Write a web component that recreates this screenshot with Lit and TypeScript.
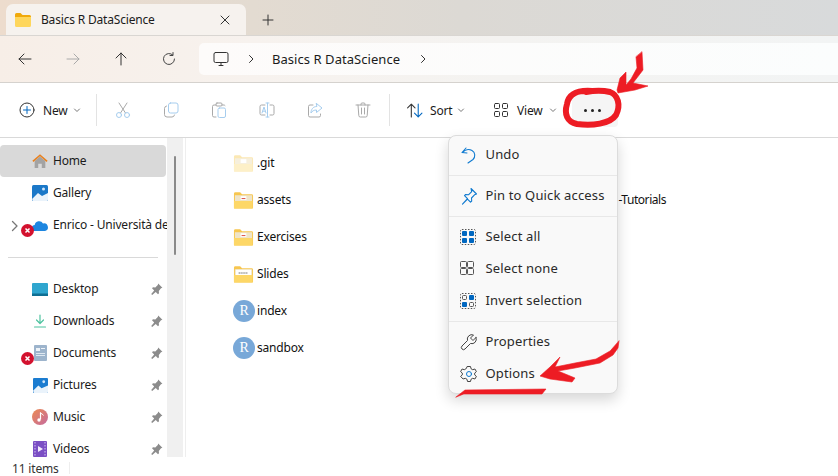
import { LitElement, html, css, svg } from "lit";
import { customElement } from "lit/decorators.js";

const S = (w: number, body: unknown, vb = "0 0 16 16") =>
  html`<svg width=${w} height=${w} viewBox=${vb} fill="none" stroke-linecap="round" stroke-linejoin="round">${body}</svg>`;

const folder = (inner: unknown = "", light = false) => html`<svg width="21" height="20" viewBox="0 0 22 20">
  <path d="M1 3.5a1.5 1.5 0 0 1 1.5-1.5h5l2 2h10a1.500 1.500 0 0 1 1.500 1.500V18a1 1 0 0 1-1 1H2a1 1 0 0 1-1-1z" fill=${light ? "#fbe8b4" : "#f7c64f"}/>
  <rect x="2" y="5" width="18" height="8" fill=${light ? "#f6efdc" : "#efe4c8"}/>
  ${inner}
  <path d="M1 11h19.500V18a1 1 0 0 1-1 1H2a1 1 0 0 1-1-1z" fill=${light ? "#fdf0c8" : "#fdd767"}/>
</svg>`;

const pin = html`<svg class="pin" width="14" height="14" viewBox="0 0 14 14"><path d="M8.2 1.6l4.2 4.2-1.4.5-2.2 2.600.2 2.300-1 1-2.300-2.300L2.200 13l-1-1 3-3.600L2 6.200l1-1 2.300.2 2.500-2.300z" fill="#8c8c8c"/></svg>`;

const errBadge = html`<svg class="err" width="13" height="13" viewBox="0 0 13 13"><circle cx="6.500" cy="6.500" r="6.500" fill="#d3112e"/><path d="M4.500 4.500l4 4M8.500 4.500l-4 4" stroke="#fff" stroke-width="1.500"/></svg>`;

const rIcon = html`<span class="r">R</span>`;

const blueOn = "#0067c0";
const grid = (fills: boolean[], dashed: boolean) => html`<svg width="16" height="16" viewBox="0 0 16 16">
  ${dashed ? svg`<rect x=".5" y=".5" width="15" height="15" rx="1.500" fill="none" stroke="#555" stroke-dasharray="1.500 1.500"/>` : ""}
  ${[[2, 2], [9, 2], [2, 9], [9, 9]].map(([x, y], i) =>
    fills[i]
      ? svg`<rect x=${x} y=${y} width="5" height="5" rx="1" fill=${blueOn}/>`
      : dashed
        ? svg`<rect x=${x + 0.5} y=${y + 0.5} width="4" height="4" rx="1" fill="none" stroke="#555"/>`
        : svg`<rect x=${x - 1.5} y=${y - 1.5} width="6" height="6" rx="1" fill="none" stroke="#555"/>`)}
</svg>`;

@customElement("app-root")
export class AppRoot extends LitElement {
  static styles = css`
    :host {
      display: block;
      position: relative;
      width: 838px;
      height: 476px;
      overflow: hidden;
      background: #fff;
      font-family: "Noto Sans", "Open Sans", sans-serif;
      font-size: 12px;
      letter-spacing: -0.18px;
      color: #1b1b1b;
    }
    .window { display: flex; flex-direction: column; height: 476px; }
    .tabs {
      height: 35px;
      box-sizing: border-box;
      padding: 4px 0 0 6px;
      display: flex;
      align-items: stretch;
      background: linear-gradient(90deg, #eddccd 0%, #e3dbd1 30%, #dcd9d4 55%, #d8dadb 100%);
    }
    .tab {
      width: 240px;
      box-sizing: border-box;
      padding: 0 15px 0 9px;
      display: flex;
      align-items: center;
      background: #f6f2ee;
      border-radius: 7px 7px 0 0;
    }
    .tab .title { margin-left: 10px; flex: 1; }
    .plus { width: 44px; display: flex; align-items: center; justify-content: center; }
    .nav {
      height: 48px;
      box-sizing: border-box;
      border-top: 1px solid #d9d6d2;
      border-bottom: 1px solid #d5d2ce;
      display: flex;
      align-items: center;
      background: linear-gradient(90deg, #f7eee7 0%, #f7f2ee 30%, #f4f3f1 60%, #f2f4f4 100%);
    }
    .nav-btn { width: 48px; height: 32px; display: flex; align-items: center; justify-content: center; }
    .navbtns { display: flex; margin: 0 6px 0 1px; }
    .address {
      flex: 1;
      height: 32px;
      margin-top: -1px;
      background: linear-gradient(90deg, #fdfbfa, #fbfdfd);
      border-radius: 5px 0 0 5px;
      display: flex;
      align-items: center;
      padding-left: 14px;
      font-size: 13px;
      letter-spacing: 0.05px;
    }
    .address .crumb { margin: 0 18px 0 16px; }
    .address .mon { margin-right: 17px; display: flex; }
    .toolbar {
      height: 55px;
      box-sizing: border-box;
      border-bottom: 1px solid #d9d9d9;
      display: flex;
      align-items: center;
      padding-left: 19px;
    }
    .tb { display: flex; align-items: center; }
    .new { width: 77px; }
    .new .t { margin: 0 5px 0 8px; }
    .clip { margin-left: 2px; }
    .sort { margin-left: 16px; width: 88px; }
    .sort .t { margin: 0 5px 0 7px; }
    .view { width: 78px; }
    .view .t { margin: 0 6px 0 9px; }
    .div2 { margin-left: 2px; }
    .divider { width: 1px; height: 32px; background: #e3e3e3; }
    .icon48 { width: 48px; display: flex; justify-content: center; }
    .chev { display: flex; }
    .more {
      width: 46px;
      height: 34px;
      box-sizing: border-box;
      padding-right: 5px;
      border-radius: 4px;
      background: #f5f5f5;
      display: flex;
      align-items: center;
      justify-content: center;
      gap: 4px;
    }
    .more i { width: 3px; height: 3px; background: #222; border-radius: 50%; }
    .body { flex: 1; display: flex; min-height: 0; }
    .side { width: 167px; padding-top: 7px; box-sizing: border-box; overflow: hidden; }
    .side-row {
      position: relative;
      height: 32px;
      display: flex;
      align-items: center;
      padding-left: 32px;
      white-space: nowrap;
      border-radius: 4px;
      overflow: hidden;
    }
    .side-row.active { background: #d9d9d9; margin-right: 1px; }
    .side-row .ico { width: 16px; height: 16px; margin-right: 5px; display: flex; align-items: center; justify-content: center; flex: none; }
    .side-row .label { flex: 1; padding-bottom: 2px; }
    .pin { margin-right: 3px; flex: none; }
    .err { position: absolute; left: 21px; bottom: 4px; }
    .exp { position: absolute; left: 9px; top: 10px; }
    .rule { height: 1px; background: #d9d9d9; margin: 15.500px 9px 15.500px 8px; }
    .track { width: 16px; background: #f0f0f0; display: flex; justify-content: center; padding-top: 18px; box-sizing: border-box; }
    .thumb { width: 2px; height: 99px; background: #8a8a8a; border-radius: 1px; }
    .gap { width: 2px; border-right: 1px solid #eeeeee; }
    .list { flex: 1; padding: 6px 0 0 48px; }
    .file { height: 37px; width: 432px; display: flex; align-items: center; color: #111; }
    .file .fi { width: 23px; display: flex; align-items: center; flex: none; margin-left: -1px; margin-right: 1px; }
    .file .nm { flex: 1; }
    .file .note { letter-spacing: -0.45px; }
    .r {
      width: 22px; height: 22px;
      border-radius: 50%;
      background: #78a8d8;
      color: #fff;
      font: 14px "Liberation Serif", serif;
      display: flex; align-items: center; justify-content: center;
    }
    .status {
      height: 19px;
      box-sizing: border-box;
      padding: 3px 0 0 12px;
      display: flex;
      align-items: center;
      color: #333;
    }
    .status .sep { width: 1px; height: 12px; background: #eee; margin-left: 10px; }
    .menu {
      position: absolute;
      left: 447.500px;
      top: 135px;
      width: 170px;
      height: 259px;
      box-sizing: border-box;
      padding-top: 3px;
      background: #f9f9f9;
      border: 1px solid #dcdcdc;
      border-radius: 8px;
      box-shadow: 0 6px 14px rgba(0,0,0,.16);
      font-size: 13px;
      letter-spacing: 0.15px;
      color: #2a2a2a;
    }
    .mi { height: 32px; display: flex; align-items: center; padding-left: 11px; gap: 8px; }
    .mi svg { flex: none; }
    .mi span { padding-bottom: 2px; }
    .mi.g span { margin-left: 2px; }
    .msep { height: 1px; background: #e8e8e8; margin: 4px 0; }
    .ink { position: absolute; left: 0; top: 0; pointer-events: none; }
    .red { fill: #ed1c24; stroke: #ed1c24; stroke-width: 0.600; }
  `;

  render() {
    const gray = "#a9a9a9";
    const lb = "#a6cdee";
    return html`
      <div class="window">
        <div class="tabs">
          <div class="tab">
            ${html`<svg width="16" height="14" viewBox="0 0 16 14"><path d="M0 1.500A1.500 1.500 0 0 1 1.500 0h4l2 2H14.500A1.500 1.500 0 0 1 16 3.500V5H0z" fill="#f0a90c"/><path d="M0 4h16v8.500a1.500 1.500 0 0 1-1.500 1.500h-13A1.500 1.500 0 0 1 0 12.500z" fill="#fed65c"/></svg>`}
            <span class="title">Basics R DataScience</span>
            ${S(12, svg`<path d="M2 2l8 8M10 2l-8 8" stroke="#333" stroke-width="1"/>`, "0 0 12 12")}
          </div>
          <div class="plus">${S(12, svg`<path d="M6 1v10M1 6h10" stroke="#333" stroke-width="1"/>`, "0 0 12 12")}</div>
        </div>
        <div class="nav">
          <div class="navbtns">
            <div class="nav-btn">${S(16, svg`<path d="M14 8H2M7 3L2 8l5 5" stroke="#333"/>`)}</div>
            <div class="nav-btn">${S(16, svg`<path d="M2 8h12M9 3l5 5-5 5" stroke="#aaa"/>`)}</div>
            <div class="nav-btn">${S(16, svg`<path d="M8 14V2M3 7l5-5 5 5" stroke="#333"/>`)}</div>
            <div class="nav-btn">${S(16, svg`<path d="M13.500 8a5.500 5.500 0 1 1-1.700-4M12 1.500V4.500H9" stroke="#444"/>`)}</div>
          </div>
          <div class="address">
            <span class="mon">${S(16, svg`<rect x="1" y="1.500" width="14" height="10" rx="1.500" stroke="#333"/><path d="M6 14.500h4M8 11.500v3" stroke="#333"/>`)}</span>
            ${S(10, svg`<path d="M3.500 1.500L7 5 3.500 8.500" stroke="#333"/>`, "0 0 10 10")}
            <span class="crumb">Basics R DataScience</span>
            ${S(10, svg`<path d="M3.500 1.500L7 5 3.500 8.500" stroke="#333"/>`, "0 0 10 10")}
          </div>
        </div>
        <div class="toolbar">
          <div class="tb new">
            ${S(16, svg`<circle cx="8" cy="8" r="7" stroke="#333"/><path d="M8 4.500v7M4.500 8h7" stroke="#0067c0"/>`)}
            <span class="t">New</span>
            <span class="chev">${S(8, svg`<path d="M1.500 3L4 5.500 6.500 3" stroke="#777"/>`, "0 0 8 8")}</span>
          </div>
          <div class="divider"></div>
          <div class="tb clip">
            <span class="icon48">${S(16, svg`<path d="M4 1l6.500 10M12 1L5.500 11" stroke=${gray}/><circle cx="4" cy="13" r="2.500" stroke=${lb}/><circle cx="12" cy="13" r="2.500" stroke=${lb}/>`)}</span>
            <span class="icon48">${S(16, svg`<rect x="5.500" y="1" width="9.500" height="10" rx="2" stroke=${lb}/><path d="M3.500 4A2.500 2.500 0 0 0 1.500 6.500V12.500A2.500 2.500 0 0 0 4 15h5a2.500 2.500 0 0 0 2.500-2" stroke=${gray}/>`)}</span>
            <span class="icon48">${S(16, svg`<path d="M5 3H3a1.500 1.500 0 0 0-1.500 1.500v9A1.500 1.500 0 0 0 3 15h2M11 3h2a1.500 1.500 0 0 1 1 .500" stroke=${gray}/><rect x="5" y="1" width="6" height="3" rx="1" stroke=${gray}/><rect x="7" y="6" width="7.500" height="9.500" rx="1.500" stroke=${lb}/>`)}</span>
            <span class="icon48">${S(16, svg`<path d="M6 3H2.500A1.500 1.500 0 0 0 1 4.500v7A1.500 1.500 0 0 0 2.500 13H6M11 3h2.500A1.500 1.500 0 0 1 15 4.500v7a1.500 1.500 0 0 1-1.500 1.500H11" stroke=${gray}/><path d="M8.500 1v14M7 1h3M7 15h3" stroke=${lb}/><path d="M3 11L5 5l2 6M3.700 9.200h2.600" stroke=${lb}/>`)}</span>
            <span class="icon48">${S(16, svg`<path d="M6 3H3a1.500 1.500 0 0 0-1.500 1.500v9A1.500 1.500 0 0 0 3 15h9a1.500 1.500 0 0 0 1.500-1.500V12" stroke=${gray}/><path d="M9.500 1.500L15 6l-5.500 4.500V8C7 8 5 9 4 11c0-3.500 2-6.500 5.500-6.500z" stroke=${lb}/>`)}</span>
            <span class="icon48">${S(16, svg`<path d="M1 3h14M6 3V2a1 1 0 0 1 1-1h2a1 1 0 0 1 1 1v1M3 3l.800 10.500A1.500 1.500 0 0 0 5.300 15h5.400a1.500 1.500 0 0 0 1.500-1.500L13 3M6.500 6v6M9.500 6v6" stroke=${gray}/>`)}</span>
          </div>
          <div class="divider div2"></div>
          <div class="tb sort">
            ${S(17, svg`<path d="M5 14V2M1.500 5.500L5 2l3.500 3.500" stroke="#333"/><path d="M11.500 2v12M8 10.500L11.500 14l3.500-3.500" stroke="#0067c0"/>`)}
            <span class="t">Sort</span>
            <span class="chev">${S(8, svg`<path d="M1.500 3L4 5.500 6.500 3" stroke="#777"/>`, "0 0 8 8")}</span>
          </div>
          <div class="tb view">
            ${S(14, svg`<rect x=".5" y=".5" width="5" height="5" rx="1" stroke="#333"/><rect x="8.500" y=".5" width="5" height="5" rx="1" stroke="#333"/><rect x=".5" y="8.500" width="5" height="5" rx="1" stroke="#333"/><rect x="8.500" y="8.500" width="5" height="5" rx="1" stroke="#333"/>`, "0 0 14 14")}
            <span class="t">View</span>
            <span class="chev">${S(8, svg`<path d="M1.500 3L4 5.500 6.500 3" stroke="#777"/>`, "0 0 8 8")}</span>
          </div>
          <div class="more"><i></i><i></i><i></i></div>
        </div>
        <div class="body">
          <div class="side">
            <div class="side-row active">
              <span class="ico"><svg width="18" height="16" viewBox="0 0 18 16"><path d="M3 8l6-5 6 5v8h-4v-5H7v5H3z" fill="#a3a3a3"/><path d="M1 8.500L9 1.500l8 7" fill="none" stroke="#e8811f" stroke-width="1.800"/></svg></span>
              <span class="label">Home</span>
            </div>
            <div class="side-row">
              <span class="ico"><svg width="16" height="16" viewBox="0 0 16 16"><rect width="16" height="16" rx="1.500" fill="#1b78c8"/><path d="M0 14l6-6 4 3 6-3v6.500a1.500 1.500 0 0 1-1.500 1.500H1z" fill="#eaf3fb"/><circle cx="11.500" cy="4" r="1.500" fill="#cfe6fa"/></svg></span>
              <span class="label">Gallery</span>
            </div>
            <div class="side-row">
              <span class="exp">${S(12, svg`<path d="M3.500 1.500L8 6 3.500 10.500" stroke="#777" stroke-width="1.300"/>`, "0 0 12 12")}</span>
              <span class="ico"><svg width="16" height="11" viewBox="0 0 16 11"><path d="M3 11a3 3 0 0 1-.300-6A4.500 4.500 0 0 1 11 3.500a3.700 3.700 0 0 1 2 7.500z" fill="#1d86e0"/></svg></span>
              <span class="label">Enrico - Università de</span>
              ${errBadge}
            </div>
            <div class="rule"></div>
            <div class="side-row">
              <span class="ico"><svg width="16" height="13" viewBox="0 0 16 13"><rect width="16" height="13" rx="1" fill="#2fa6cf"/><rect y="10.500" width="16" height="2.500" fill="#0f6f93"/></svg></span>
              <span class="label">Desktop</span>${pin}
            </div>
            <div class="side-row">
              <span class="ico">${S(14, svg`<path d="M7 1v8M3.500 6L7 9.500 10.500 6" stroke="#4fc3a0" stroke-width="1.200"/><path d="M1.500 13h11" stroke="#4fc3a0" stroke-width="1.200"/>`, "0 0 14 14")}</span>
              <span class="label">Downloads</span>${pin}
            </div>
            <div class="side-row">
              <span class="ico"><svg width="13" height="16" viewBox="0 0 13 16"><rect width="13" height="16" rx="1" fill="#9db4cc"/><rect x="2" y="3" width="4" height="3" fill="#eef3f8"/><rect x="7" y="3" width="4" height="1" fill="#eef3f8"/><rect x="2" y="8" width="9" height="1" fill="#dfe8f0"/><rect x="2" y="10" width="9" height="1" fill="#dfe8f0"/></svg></span>
              <span class="label">Documents</span>${pin}
              ${errBadge}
            </div>
            <div class="side-row">
              <span class="ico"><svg width="15" height="15" viewBox="0 0 14 14"><rect width="14" height="14" rx="1" fill="#1b7cd0"/><path d="M0 12l5-5 3 2.500L14 7v6a1 1 0 0 1-1 1H1z" fill="#eaf3fb"/><circle cx="10" cy="3.500" r="1.300" fill="#cfe6fa"/></svg></span>
              <span class="label">Pictures</span>${pin}
            </div>
            <div class="side-row">
              <span class="ico"><svg width="16" height="16" viewBox="0 0 16 16"><defs><linearGradient id="mg" x1="0" y1="0" x2="1" y2="1"><stop offset="0" stop-color="#ec8a50"/><stop offset="1" stop-color="#c56ba0"/></linearGradient></defs><circle cx="8" cy="8" r="8" fill="url(#mg)"/><path d="M8.500 3.500v7" stroke="#fff" stroke-width="1.200"/><path d="M8.500 3.500c.5 1.500 2.500 1.500 3 3" stroke="#fff" fill="none"/><circle cx="7" cy="11" r="1.700" fill="#fff"/></svg></span>
              <span class="label">Music</span>${pin}
            </div>
            <div class="side-row">
              <span class="ico"><svg width="14" height="16" viewBox="0 0 14 16"><rect width="14" height="16" rx="1" fill="#7b4fc4"/><path d="M2 1v14M12 1v14" stroke="#c7b0ee" stroke-dasharray="1.500 1.500" stroke-width="1.200"/><path d="M5 5l5 3-5 3z" fill="#f1eafc"/></svg></span>
              <span class="label">Videos</span>${pin}
            </div>
          </div>
          <div class="track"><div class="thumb"></div></div>
          <div class="gap"></div>
          <div class="list">
            <div class="file"><span class="fi">${folder(svg`<rect x="8" y="6" width="6" height="4" fill="#fff"/>`, true)}</span><span class="nm">.git</span></div>
            <div class="file"><span class="fi">${folder(svg`<rect x="8" y="6" width="6" height="4" fill="#fff"/><path d="M9 8.500h4" stroke="#d9483b"/>`)}</span><span class="nm">assets</span><span class="note">-Tutorials</span></div>
            <div class="file"><span class="fi">${folder(svg`<rect x="8" y="6" width="6" height="4" fill="#fff"/><path d="M9 8.500h4" stroke="#d9483b"/>`)}</span><span class="nm">Exercises</span></div>
            <div class="file"><span class="fi">${folder(svg`<rect x="3" y="5.500" width="16" height="6" fill="#fff"/><path d="M6 9h10" stroke="#999" stroke-width="2" stroke-dasharray="1 1"/>`)}</span><span class="nm">Slides</span></div>
            <div class="file"><span class="fi">${rIcon}</span><span class="nm">index</span></div>
            <div class="file"><span class="fi">${rIcon}</span><span class="nm">sandbox</span></div>
          </div>
        </div>
        <div class="status"><span>11 items</span><span class="sep"></span></div>
      </div>

      <div class="menu">
        <div class="mi">${S(18, svg`<path d="M6 2L2 6.500l5 .5M2.500 6.500C5 3.500 9 3 12 4.500c3.500 2 3.500 6.500 1 9L8 17" stroke="#0f7ad0" stroke-width="1.100"/>`, "0 0 18 18")}<span>Undo</span></div>
        <div class="msep"></div>
        <div class="mi">${S(18, svg`<path d="M11 1.500l5.500 5.500-2 .8-3 3.200.2 3-1.200 1.200-3-3-5 5 5-5.500-3-3 1.200-1.200 3 .2 3-3z" stroke="#0f7ad0" stroke-width="1.100"/>`, "0 0 18 18")}<span>Pin to Quick access</span></div>
        <div class="msep"></div>
        <div class="mi g">${grid([true, true, true, true], true)}<span>Select all</span></div>
        <div class="mi g">${grid([false, false, false, false], false)}<span>Select none</span></div>
        <div class="mi g">${grid([false, true, true, false], true)}<span>Invert selection</span></div>
        <div class="msep"></div>
        <div class="mi">${S(18, svg`<path d="M16 4.500l-3 3-2.500-2.500 3-3A4.500 4.500 0 0 0 7.500 7.500L2 13a2 2 0 0 0 3 3l5.500-5.500A4.500 4.500 0 0 0 16 4.500z" stroke="#444"/>`, "0 0 18 18")}<span>Properties</span></div>
        <div class="mi">${S(18, svg`<path d="M7.500 1.500h3l.5 2.200 1.700 1 2.200-.7 1.500 2.600-1.700 1.500v1.800l1.700 1.500-1.500 2.600-2.200-.7-1.700 1-.5 2.200h-3l-.5-2.200-1.700-1-2.200.7L.6 11.400l1.700-1.500V8.100L.6 6.600 2.100 4l2.200.7 1.700-1z" stroke="#444"/><circle cx="9" cy="9" r="2.500" stroke="#0f7ad0"/>`, "0 0 18 18")}<span>Options</span></div>
      </div>

      <svg class="ink" width="838" height="476" viewBox="0 0 838 476" fill="none" stroke-linecap="round" stroke-linejoin="round">
        <path d="M592 91C578 90 569 93 567 104C564 114 567 122 577 124C592 126 610 124 616 115C621 105 618 95 610 92C602 90 596 90 586 92" stroke="#ed1c24" stroke-width="6"/>
        <polygon class="red" points="642,52 643,70 633,83 648,86 635,90 618,93 617,90 620,78 626,72 626,85 631,79 637,68 636,57"/>
        <polygon class="red" points="619,341 618,348 613,355 600,363 575,368 558,371 575,378 572,382 550,379 540,376 550,367 560,357 555,367 575,363 596,359 610,351"/>
        <polygon class="red" points="456,397 465,390 546,389 542,394 464,394"/>
      </svg>
    `;
  }
}
